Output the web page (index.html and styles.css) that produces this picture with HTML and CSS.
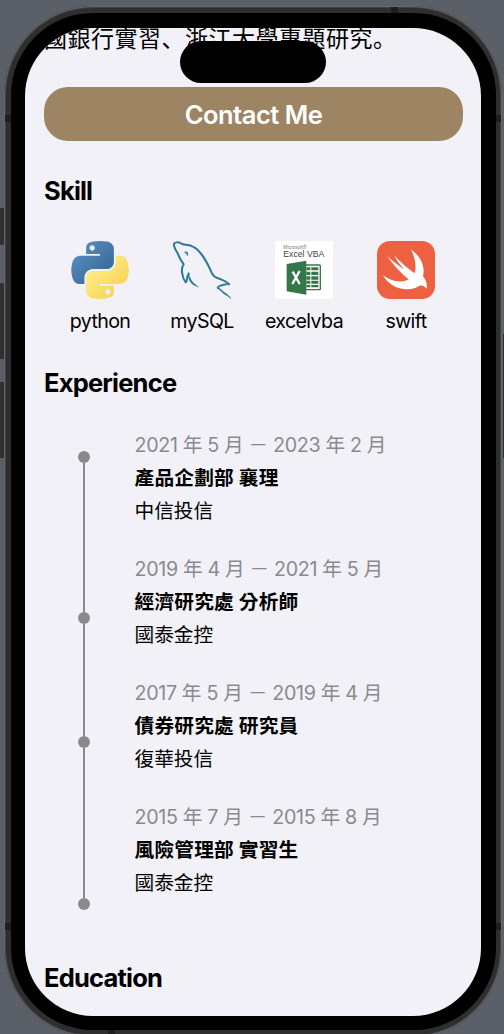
FILE: index.html
```html
<!DOCTYPE html>
<html lang="zh-Hant">
<head>
<meta charset="utf-8">
<title>Resume</title>
<link rel="stylesheet" href="styles.css">
</head>
<body>
<div class="stage">
  <i class="key key-action"></i><i class="key key-up"></i><i class="key key-down"></i><i class="key key-power"></i>
  <div class="phone">
    <i class="band band-left band-high"></i><i class="band band-left band-low"></i>
    <i class="band band-right band-high"></i><i class="band band-right band-low"></i>
    <i class="band band-top"></i><i class="band band-bottom"></i>
    <div class="bezel">
      <main class="screen">
        <div class="island"></div>
        <p class="intro" lang="zh-Hans">國銀行實習、浙江大學專題研究。</p>
        <button class="contact"><span>Contact Me</span></button>
        <h2 class="title title-skill">Skill</h2>
        <div class="skills">
          <div class="skill">
            <svg class="logo" viewBox="0 0 111 112">
              <defs>
                <linearGradient id="blue" x1="0" y1="0" x2="1" y2="1"><stop offset="0" stop-color="#5f95c9"/><stop offset="1" stop-color="#315f8d"/></linearGradient>
                <linearGradient id="yellow" x1="1" y1="1" x2="0" y2="0"><stop offset="0" stop-color="#fff095"/><stop offset=".35" stop-color="#fde67b"/><stop offset="1" stop-color="#f5cd45"/></linearGradient>
                <path id="snake" d="M54.92 0C50.34.02 45.96.41 42.1 1.09 30.76 3.1 28.7 7.29 28.7 15.03v10.22h26.81v3.41H18.64c-7.8 0-14.62 4.68-16.75 13.59-2.46 10.21-2.57 16.59 0 27.25 1.9 7.94 6.46 13.59 14.25 13.59h9.22V70.84c0-8.85 7.65-16.65 16.75-16.65h26.78c7.45 0 13.4-6.14 13.4-13.63V15.03c0-7.26-6.13-12.72-13.4-13.94C64.28.33 59.5-.02 54.92 0zM40.42 8.22c2.77 0 5.03 2.3 5.03 5.12s-2.26 5.1-5.03 5.1-5.03-2.28-5.03-5.1 2.25-5.12 5.03-5.12z"/>
              </defs>
              <use href="#snake" fill="url(#blue)"/>
              <use href="#snake" fill="url(#yellow)" transform="rotate(180 55.5 55.88)"/>
            </svg>
            <span class="skill-name">python</span>
          </div>
          <div class="skill">
            <svg class="logo" viewBox="339 33 174 174" fill="none" stroke="#2c7a93" stroke-width="6" stroke-linejoin="round" stroke-linecap="round">
              <path d="M342 46C339 35 358 35 364 41C371 46 383 42 397 49C424 60 443 101 456 130C463 145 471 142 485 149C495 153 503 158 507 163"/>
              <path d="M342 46C344 59 353 67 357 79C361 91 367 95 371 103C362 113 365 142 377 157C384 153 377 145 386 131"/>
              <path d="M376 67C380 66 382 69 382 74" stroke-width="5"/>
              <path d="M385 129C388 135 390 149 402 160C406 164 411 168 416 171C407 168 398 165 393 158C386 150 384 138 385 129z" fill="#2c7a93" stroke-width="1"/>
              <path d="M507 163C497 166 483 166 474 173C484 177 488 185 497 190C504 195 510 201 513 206C507 200 502 197 494 193C486 188 481 179 471 175C470 168 484 162 507 160z" fill="#2c7a93" stroke-width="2"/>
            </svg>
            <span class="skill-name">mySQL</span>
          </div>
          <div class="skill">
            <svg class="logo" viewBox="0 0 174 174">
              <path fill="#fff" d="M0 0h174v174H0z"/>
              <text class="logo-text" x="25" y="24" font-size="14" textLength="70" lengthAdjust="spacingAndGlyphs" fill="#777">Microsoft®</text>
              <text class="logo-text" x="25" y="49" font-size="25" textLength="123" lengthAdjust="spacingAndGlyphs" fill="#444">Excel VBA</text>
              <path fill="#fff" stroke="#347749" stroke-width="4" d="M86 72h47q3 0 3 3v68q0 3-3 3H86z"/>
              <path fill="#347749" d="M35 69l59-10v102l-59-10z"/>
              <path fill="#347749" d="M94 79h12v9H94zM109 79h21v9h-21zM94 92h12v10H94zM109 92h21v10h-21zM94 106h12v10H94zM109 106h21v10h-21zM94 119h12v9H94zM109 119h21v9h-21zM94 132h12v7H94zM109 132h21v7h-21z"/>
              <path stroke="#fff" stroke-width="7" d="M53 92l21 37M74 90l-22 39"/>
            </svg>
            <span class="skill-name">excelvba</span>
          </div>
          <div class="skill">
            <svg class="logo" viewBox="351 33 174 174">
              <rect x="351" y="33" width="174" height="174" rx="39" fill="#ed6042"/>
              <path fill="#fff" d="M453 59C480 76 497 108 489 139C500 152 503 168 499 176C491 163 480 166 473 170C440 187 392 177 369 136C391 153 424 161 446 148C421 129 397 100 382 79C399 94 418 109 433 119C422 107 409 90 402 76C421 96 445 117 464 130C470 109 465 82 453 59z"/>
            </svg>
            <span class="skill-name">swift</span>
          </div>
        </div>
        <h2 class="title title-experience">Experience</h2>
        <div class="timeline">
          <div class="rail">
            <i class="dot"></i><i class="line long"></i><i class="dot"></i><i class="line"></i><i class="dot"></i><i class="line long"></i><i class="dot"></i>
          </div>
          <div class="jobs">
            <section class="job"><p class="date">2021 年 5 月 － 2023 年 2 月</p><h3>產品企劃部 襄理</h3><p>中信投信</p></section>
            <section class="job"><p class="date">2019 年 4 月 － 2021 年 5 月</p><h3>經濟研究處 分析師</h3><p>國泰金控</p></section>
            <section class="job"><p class="date">2017 年 5 月 － 2019 年 4 月</p><h3>債券研究處 研究員</h3><p>復華投信</p></section>
            <section class="job"><p class="date">2015 年 7 月 － 2015 年 8 月</p><h3>風險管理部 實習生</h3><p>國泰金控</p></section>
          </div>
        </div>
        <h2 class="title title-education">Education</h2>
      </main>
    </div>
  </div>
</div>
</body>
</html>
```
FILE: styles.css
```css
* { box-sizing: border-box; margin: 0; padding: 0; }
body {
  font-family: Inter, "Noto Sans CJK TC", sans-serif;
  color: #000;
}
.stage {
  position: relative;
  height: 1034px;
  padding: 6px 2px 0 4px;
  overflow: hidden;
  background: #5a5f68;
}
.phone {
  position: relative;
  width: 498px;
  height: 1031px;
  padding: 7px 6px 7px 7px;
  border-radius: 89px;
  background: #2e2e2e;
  box-shadow: inset 0 0 0 1px #65676a, inset 0 0 0 2px #404143;
}
.bezel {
  position: relative;
  height: 1017px;
  padding: 15px 15px 14px 14px;
  border-radius: 82px;
  background: #000;
}
.screen {
  position: relative;
  height: 988px;
  padding: 0 19px;
  border-radius: 68px;
  overflow: hidden;
  background: #f2f1f7;
}
.key { position: absolute; left: 0; width: 4px; background: #303030; }
.key-action { top: 208px; height: 37px; }
.key-up { top: 283px; height: 76px; }
.key-down { top: 382px; height: 76px; }
.key-power { left: auto; right: 0; top: 334px; width: 1px; height: 124px; }
.band { position: absolute; background: #1e1e1e; }
.band-left { left: 1px; width: 6px; height: 7px; }
.band-right { right: 1px; width: 6px; height: 7px; }
.band-high { top: 109px; }
.band-low { top: 917px; }
.band-top { top: 1px; left: 387px; width: 7px; height: 6px; }
.band-bottom { bottom: 1px; left: 104px; width: 7px; height: 6px; }
.island {
  position: absolute;
  top: 13px;
  left: 155px;
  width: 146px;
  height: 42px;
  border-radius: 21px;
  background: #000;
}
.intro {
  height: 59px;
  font-family: Inter, "Noto Sans CJK SC", sans-serif;
  font-size: 23px;
  line-height: 22px;
  letter-spacing: .5px;
  white-space: nowrap;
}
.contact {
  display: block;
  width: 419px;
  height: 54px;
  border: 0;
  border-radius: 24px;
  background: #9d8563;
  color: #fff;
  font: 600 25.5px/55px Inter, sans-serif;
  letter-spacing: -.5px;
}
.title { font-size: 25.5px; font-weight: 700; line-height: 30px; letter-spacing: -.8px; }
.title-skill { margin-top: 35px; }
.skills {
  display: grid;
  grid-template-columns: repeat(4, 102px);
  margin: 35px 0 0 5px;
}
.skill { display: flex; flex-direction: column; align-items: center; gap: 10px; }
.logo { display: block; width: 58px; height: 58px; }
.logo-text { font-family: "Liberation Sans", sans-serif; }
.skill-name { font-size: 19.6px; line-height: 24px; letter-spacing: -.6px; }
.title-experience { margin-top: 35px; }
.timeline { display: flex; gap: 44.5px; margin-top: 30px; }
.rail {
  display: flex;
  flex-direction: column;
  align-items: center;
  width: 12px;
  margin: 23px 0 0 34px;
}
.dot { width: 12px; height: 12px; flex: none; border-radius: 50%; background: #8a898e; }
.line { width: 2.4px; height: 112px; flex: none; background: #8a898e; }
.line.long { height: 149.3px; }
.jobs { display: flex; flex-direction: column; gap: 25px; margin-top: 1px; font-size: 19.7px; line-height: 33px; white-space: nowrap; }
.job h3 { font-size: 19.7px; font-weight: 700; letter-spacing: .2px; }
.date { color: #8a898e; letter-spacing: -.35px; }
.title-education { margin-top: 53px; }
```
